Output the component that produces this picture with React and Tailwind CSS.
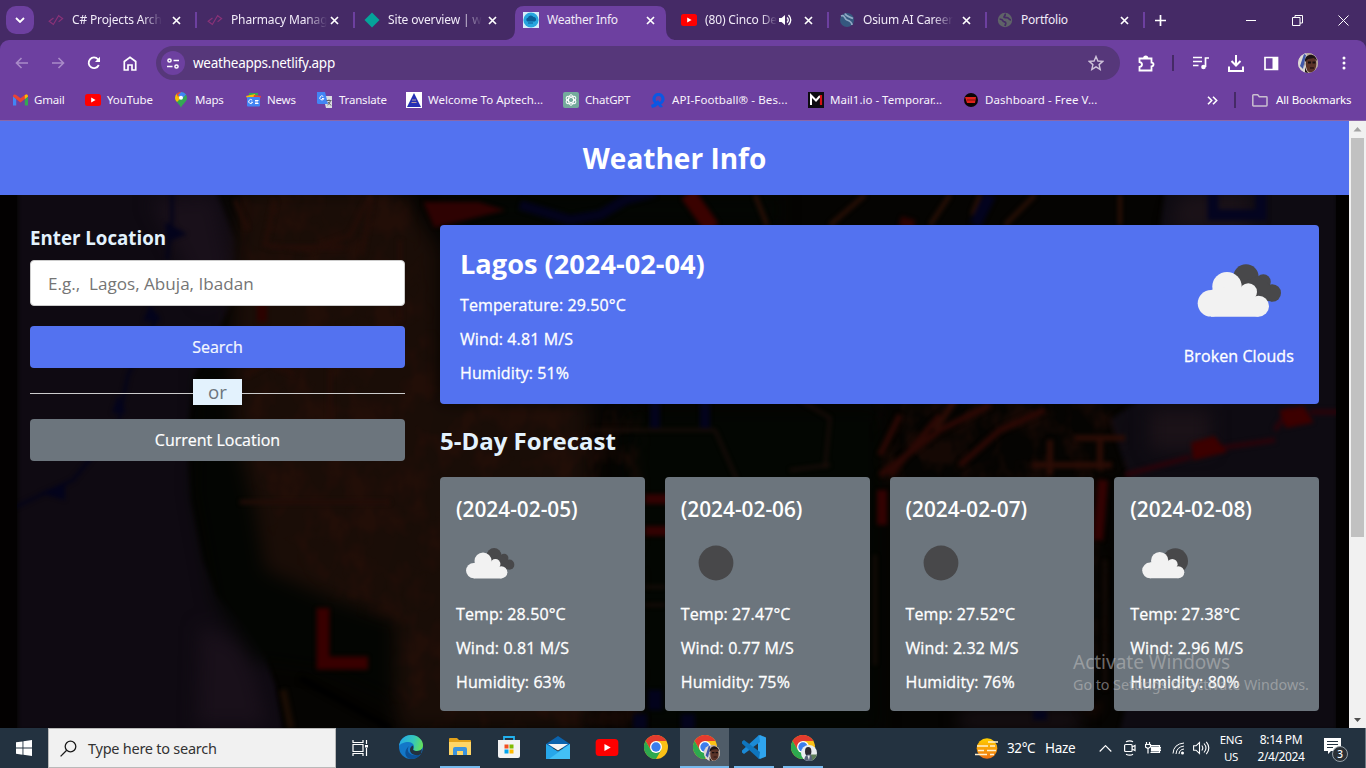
import React from 'react';

const UI = "font-['Noto_Sans','Open_Sans',sans-serif]";

function Cloud({ size, className = '' }) {
  return (
    <svg width={size} height={size} viewBox="0 0 100 100" className={className}>
      <g fill="#48484a">
        <circle cx="57" cy="42" r="12.700" /><circle cx="74.300" cy="46.700" r="7.500" /><circle cx="83.300" cy="58" r="8.700" />
        <path d="M56 46 69 41l13 10-2 15-14 2z" />
      </g>
      <g fill="#f2f2f2">
        <circle cx="22" cy="68.300" r="13.300" /><circle cx="38" cy="51.700" r="14.700" /><circle cx="59.300" cy="57" r="8.700" /><circle cx="69.500" cy="71.200" r="10.500" />
        <path d="M22 55 45 50l20 8 4.500 23.700H22z" />
      </g>
    </svg>
  );
}

function Moon() {
  return <svg width="70" height="70" viewBox="0 0 70 70"><circle cx="35" cy="35" r="17.4" fill="#48484a" /></svg>;
}

function Scattered() {
  return (
    <svg width="70" height="70" viewBox="0 0 70 70">
      <circle cx="45.300" cy="33" r="12.700" fill="#48484a" />
      <g fill="#f2f2f2">
        <circle cx="20" cy="42.400" r="7.800" /><circle cx="29.700" cy="32.700" r="8.700" /><circle cx="42.300" cy="36.200" r="5.300" /><circle cx="48.300" cy="44.200" r="6" />
        <path d="M20 34.600 34 32l10 3 4.300 15.200H20z" />
      </g>
    </svg>
  );
}

function YT({ w = 16, h = 12 }) {
  return (
    <svg width={w} height={h} viewBox="0 0 16 12" className="shrink-0">
      <rect width="16" height="12" rx="2.5" fill="#f00" /><path d="M6.2 3.6v4.8L10.6 6z" fill="#fff" />
    </svg>
  );
}

function CodeFav() {
  return (
    <svg width="16" height="16" viewBox="0 0 16 16" fill="none" stroke="#8a3278" strokeWidth="1.2">
      <path d="M5.5 6 1.2 9.3 4.8 12M10.2 3.5l4.4 3-4 3.4M11 3 5 13" />
    </svg>
  );
}

function Swirl({ a, b }) {
  return (
    <svg width="16" height="16" viewBox="0 0 16 16">
      <circle cx="8" cy="8" r="7" fill={a} />
      <path d="M2 4c4-2 3 3 6 4s5 2 5 5M6 1.5c1 3 4 3 8 5" stroke={b} strokeWidth="1.7" fill="none" />
    </svg>
  );
}

function Globe() {
  return (
    <svg width="16" height="16" viewBox="0 0 16 16">
      <circle cx="8" cy="8" r="7.2" fill="#5f6368" />
      <path d="M2.6 7c2 .2 3 .8 3.6 2.2.8 1 2.6.4 2.6 2 0 1-.6 1.6-.8 2.8M8 1.6c1 1.8-1 2.6-1 3.6 1.4 1.4 3-.6 4.4 1 1 1.2 1.400 1.800 2.600 1.600" stroke="#452a66" strokeWidth="1.7" fill="none" />
    </svg>
  );
}

function WeatherFav() {
  return (
    <svg width="16" height="16" viewBox="0 0 16 16">
      <rect width="16" height="16" fill="#d6eefa" /><circle cx="8" cy="8" r="7.6" fill="#27a5de" />
      <path d="M4.500 9.500a2 2 0 0 1 .4-3.800 3 3 0 0 1 5.600-.6 2.300 2.300 0 0 1 1.200 4.400z" fill="#0b5f99" />
      <path d="M5 11h5" stroke="#0b5f99" />
    </svg>
  );
}

function X() {
  return (
    <svg width="9" height="9" viewBox="0 0 9 9" className="shrink-0"><path d="M1 1l7 7M8 1 1 8" stroke="#fff" strokeWidth="1.7" /></svg>
  );
}

function Tab({ icon, label, sep = true, tight = 'tracking-[-0.15px]', extra, fade = true, pad = 'pl-[14px]' }) {
  return (
    <div className={`relative flex h-[34px] w-[158px] shrink-0 items-center ${pad}`}>
      <div className="flex w-4 shrink-0 justify-center">{icon}</div>
      <div className={`ml-2 shrink-0 whitespace-nowrap text-[12px] text-[#f1ebf8] ${tight} ${fade ? '[mask-image:linear-gradient(to_right,black_78%,transparent)]' : ''}`}>{label}</div>
      {extra}
      <div className="absolute right-[11px]"><X /></div>
      {sep && <div className="absolute -right-[5px] h-4 w-0.5 bg-[#6d40a0]" />}
    </div>
  );
}

function Book({ icon, label, w, tight = 'tracking-[-0.2px]' }) {
  return (
    <div className={`flex shrink-0 items-center gap-[6px] ${w}`}>
      <span className="flex w-4 shrink-0 justify-center">{icon}</span>
      <span className={`whitespace-nowrap text-[11.5px] text-[#f8f4fc] ${tight}`}>{label}</span>
    </div>
  );
}

function Avatar({ size, alt }) {
  return (
    <svg width={size} height={size} viewBox="0 0 20 20">
      <defs><clipPath id={`av${size}${alt ? 'b' : 'a'}`}><circle cx="10" cy="10" r="10" /></clipPath></defs>
      <g clipPath={`url(#av${size}${alt ? 'b' : 'a'})`}>
        <rect width="20" height="20" fill={alt ? '#e9edf0' : '#c9c4c4'} />
        {alt ? (
          <>
            <path d="M12 12h8v8h-9z" fill="#5d7d58" /><ellipse cx="9" cy="8" rx="4" ry="5.500" fill="#2c2a33" /><path d="M4 20c0-6 3-8 6-8s4 3 4 8z" fill="#56627a" /><path d="m8 13 2 6 1-6z" fill="#eee" />
          </>
        ) : (
          <>
            <path d="M0 0h8v20H0z" fill="#ddd8d4" /><path d="M2 13 6 1l2 1-3 14z" fill="#4058a8" />
            <path d="M9 0h11v20H9z" fill="#b9a89a" />
            <ellipse cx="13" cy="11" rx="5.300" ry="9" fill="#5a3328" /><path d="M7 9c-1-9 11-10 12-1l-3-3-6 1z" fill="#1d1214" /><path d="M10 9.500h3M14.500 9.500h3" stroke="#160d0e" strokeWidth="1.800" /><path d="M12 15h4" stroke="#2b1414" strokeWidth="1.500" />
            <path d="M7 8c-1 4 0 8 3 12H7z" fill="#1d1214" />
          </>
        )}
      </g>
    </svg>
  );
}

function Chrome() {
  return (
    <svg width="24" height="24" viewBox="0 0 24 24">
      <circle cx="12" cy="12" r="12" fill="#fbc116" />
      <path d="M1.600 6A12 12 0 0 1 22.400 6H12L6.800 15z" fill="#e33b2e" />
      <path d="M1.600 6 6.800 15l5.200 3 5.200-3L12 24A12 12 0 0 1 1.600 6z" fill="#2da94f" />
      <circle cx="12" cy="12" r="6" fill="#fff" /><circle cx="12" cy="12" r="4.700" fill="#3b7ded" />
    </svg>
  );
}

function Backdrop() {
  return (
    <svg className="absolute inset-0" width="1349" height="533" viewBox="0 195 1349 533">
      <defs>
        <filter id="soft" x="-5%" y="-5%" width="110%" height="110%" colorInterpolationFilters="sRGB"><feGaussianBlur stdDeviation="2.200" /></filter>
        <filter id="wide" x="-10%" y="-10%" width="120%" height="120%" colorInterpolationFilters="sRGB"><feGaussianBlur stdDeviation="9" /></filter>
        <filter id="grain" x="0" y="0" width="100%" height="100%" colorInterpolationFilters="sRGB">
          <feGaussianBlur in="SourceGraphic" stdDeviation="6" result="area" />
          <feTurbulence type="fractalNoise" baseFrequency="0.040 0.030" numOctaves="3" seed="8" />
          <feColorMatrix values="0 0 0 0 0.190  0 0 0 0 0.065  0 0 0 0 0.035  3 0 0 0 -1.250" />
          <feComposite in2="area" operator="in" />
        </filter>
      </defs>
      <rect y="195" width="1349" height="533" fill="#050402" />
      <g filter="url(#soft)">
        <path d="M18 190H215l20 50-3 60-20 45-17 30-8 60 4 65 12 60 14 35 40 40 18 50 8 45H18z" fill="#0f0a12" />
        <path d="M1165 190h172v540H1120l40-170-30-80-20-60 30-20z" fill="#0e0b12" />
      </g>
      <g filter="url(#wide)">
        <path d="M240 190H400l40 60v370l-100 20-80-70-25-110-5-90z" fill="#1a0d07" />
        <path d="M440 400h150v330H400l-20-130z" fill="#190d07" />
        <path d="M150 200 215 195l15 70-25 40zM200 625l40 20 15 30 12 50h-70z" fill="#19101a" />
        <path d="M200 370h28l2 60 10 20 15 60 10 60 70 30 60 20v80l-70-30-70-10-40-60-20-110z" fill="#030502" />
        <path d="M620 410h260v320H640zM450 195h330v30H450z" fill="#030602" />
        <path d="M1180 195h70v35h-80zM1150 410h60v40h-60zM960 712h120v16H960z" fill="#1b1218" />
      </g>
      <path d="M240 190h170v50l30 160 200 10v318H400V620l-60-20-75-90-20-120zM880 400h230l20 75h-30v240h-20V480H880z" filter="url(#grain)" opacity=".38" />
      <g filter="url(#soft)" fill="none" strokeWidth="7">
        <path d="M172 190v30l-5 40M158 315l-30 60-10 50-45 55-60 28" stroke="#03031a" strokeWidth="3" />
        <path d="M165 222l22 12-20 8zM150 305l11 16h-18zM118 395l8 18h-14zM40 493l25-10v17z" fill="#03031c" />
        <path d="M235 200l12 28M275 200l-10 45 45 5 40-15 20-40M372 195l-10 60M270 247h75M245 375l25-13 25 12M330 370v60M240 502h150M400 240v80" stroke="#240d07" strokeWidth="4" />
        <path d="M428 205h50l16 5-58 14z" stroke="#2e0202" strokeWidth="6" fill="#2e0202" />
        <path d="M323 608v55h45" stroke="#380000" strokeWidth="13" />
        <path d="M688 194l24 34" stroke="#3a0200" strokeWidth="16" />
        <path d="M262 300v22M900 221l14 4" stroke="#2c0200" strokeWidth="10" />
        <path d="M755 195l12 30M865 195l-35 30M950 195l-20 30M980 195l-8 20M1035 195l-30 30M1120 195v30" stroke="#2b1006" strokeWidth="4" />
        <path d="M520 205l50 15 30-5 25-15 30-8M655 400v28M705 400v28" stroke="#03031c" strokeWidth="10" />
        <path d="M990 195l-15 30" stroke="#03031e" strokeWidth="12" />
        <path d="M1213 190v25h48v-25" stroke="#040420" strokeWidth="11" />
        <path d="M880 475l60-45 50-25M900 415l-20 40M960 465l40-35 45-20M940 415l-50 60" stroke="#2b0804" strokeWidth="6" />
        <path d="M1050 440v35M1075 438h50M1032 465h80M1100 440v30M955 400l-20 30" stroke="#2b0c05" strokeWidth="6" />
        <path d="M1125 475l65-18M1220 448l55-8M1275 430l15-22M1310 412h38" stroke="#2a030a" strokeWidth="5" />
        <path d="M1195 445l18-5 8 10-25 6zM1284 413l18-3 6 10-20 4z" fill="#3c0000" stroke="#3c0000" />
        <path d="M645 499h24M645 531h24M882 490v35M1103 480l-5 60" stroke="#330202" strokeWidth="10" />
        <path d="M655 690v20M640 714v15M688 714v15M1040 710v10" stroke="#03031c" strokeWidth="14" />
        <path d="M715 430l22 50M800 400l30 18-5 50M590 430h125M790 470l40-5M645 587h20M645 605h20M875 555v110M1105 560v130" stroke="#1e0e0a" strokeWidth="2.500" />
        <path d="M283 690l8 38" stroke="#1b0d04" strokeWidth="7" />
        <path d="M300 678l90 50" stroke="#000" strokeWidth="7" />
      </g>
      <rect y="195" width="17" height="533" fill="#030101" /><rect x="1336" y="195" width="13" height="533" fill="#020101" />
    </svg>
  );
}

const days = [
  ['(2024-02-05)', '28.50', '0.81', '63', <Cloud size={58} className="ml-[5px] mt-[3px]" />],
  ['(2024-02-06)', '27.47', '0.77', '75', <Moon />],
  ['(2024-02-07)', '27.52', '2.32', '76', <Moon />],
  ['(2024-02-08)', '27.38', '2.96', '80', <Scattered />],
];

function Browser() {
  return (
    <div className={`h-[121px] shrink-0 bg-[#452a66] ${UI}`}>
      <div className="flex h-10 items-start pl-[6px] pt-[3px]">
        <div className="mt-[3px] flex h-7 w-7 items-center justify-center rounded-[10px] bg-[#6d40a0]">
          <svg width="10" height="6" viewBox="0 0 10 6"><path d="m1 1 4 4 4-4" fill="none" stroke="#fff" strokeWidth="1.800" /></svg>
        </div>
        <Tab icon={<CodeFav />} label="C# Projects Arch" />
        <Tab icon={<CodeFav />} label="Pharmacy Manag" pad="pl-[15px]" />
        <Tab icon={<svg width="16" height="16" viewBox="0 0 16 16"><path d="m8 .5 7.500 7.500L8 15.500.5 8z" fill="#05a39a" /></svg>} label="Site overview | w" sep={false} />
        <div className="relative -mx-[5px] mt-[3px] flex h-[34px] w-[168px] shrink-0 items-start justify-center">
          <svg className="absolute left-[3px] top-0" width="168" height="34" viewBox="0 0 168 34"><path d="M-2 34Q9 34 9 23V9Q9 0 18 0H151Q160 0 160 9V23Q160 34 171 34z" fill="#6d40a0" /></svg>
          <div className="relative -mt-[3px] ml-0"><Tab fade={false} sep={false} icon={<WeatherFav />} label="Weather Info" tight="tracking-[-0.25px]" pad="pl-[15px]" /></div>
        </div>
        <Tab icon={<YT />} label="(80) Cinco De" tight="tracking-[-0.15px]" pad="pl-[15px]" extra={
          <svg width="14" height="12" viewBox="0 0 14 12" className="absolute left-[112px]"><path d="M1 4h2.500L7 1v10L3.500 8H1z" fill="#fff" /><path d="M9 3.500q2.500 2.500 0 5M10.500 1q4.500 5 0 10" fill="none" stroke="#fff" strokeWidth="1.300" /></svg>} />
        <Tab icon={<Swirl a="#35587f" b="#90a8c4" />} label="Osium AI Career" pad="pl-[15px]" />
        <Tab icon={<Globe />} label="Portfolio" tight="tracking-[-0.2px]" fade={false} pad="pl-[15px]" />
        <svg width="11" height="11" viewBox="0 0 11 11" className="ml-[15px] mt-[12px]"><path d="M5.500 0v11M0 5.500h11" stroke="#fff" strokeWidth="1.700" /></svg>
        <svg width="10" height="10" viewBox="0 0 10 10" className="ml-auto mt-[12px]"><path d="M0 5.500h10" stroke="#fff" /></svg>
        <svg width="11" height="11" viewBox="0 0 11 11" className="ml-9 mt-[12px]" fill="none" stroke="#fff"><path d="M.5 2.500h7.500v8H.5zM3 2.500V.5h7.500V8H8" /></svg>
        <svg width="11" height="11" viewBox="0 0 11 11" className="ml-[35px] mr-[17px] mt-[12px]"><path d="m.5.5 10 10M10.500.5l-10 10" stroke="#fff" /></svg>
      </div>
      <div className="flex h-[81px] flex-col rounded-t-[9px] border-b border-[#8b66a8] bg-[#6d40a0]">
        <div className="flex h-[46px] shrink-0 items-center">
          <svg width="14" height="12" viewBox="0 0 14 12" className="ml-[15px]" fill="none" stroke="#a98bc8" strokeWidth="1.600"><path d="M13 6H1.500M6.500 1l-5 5 5 5" /></svg>
          <svg width="14" height="12" viewBox="0 0 14 12" className="ml-[22px]" fill="none" stroke="#a98bc8" strokeWidth="1.600"><path d="M1 6h11.500M7.500 1l5 5-5 5" /></svg>
          <svg width="14" height="14" viewBox="0 0 14 14" className="ml-[22px]"><path d="M11.800 9A5.300 5.300 0 1 1 11 3.300L12.500 5" fill="none" stroke="#fff" strokeWidth="1.800" /><path d="M13 .8V6H8z" fill="#fff" /></svg>
          <svg width="14" height="15" viewBox="0 0 14 15" className="ml-[22px]" fill="none" stroke="#fff" strokeWidth="1.700"><path d="M1.300 14V5.500L7 1.300l5.700 4.200V14H9V9H5v5z" /></svg>
          <div className="ml-[19px] flex h-[34px] w-[964px] items-center rounded-full bg-[#56377a] pl-[5px] pr-[16px]">
            <div className="flex h-6 w-6 items-center justify-center rounded-full bg-[#6d40a0]">
              <svg width="12" height="11" viewBox="0 0 12 11" fill="none" stroke="#fff" strokeWidth="1.500"><circle cx="2.500" cy="2.500" r="1.600" /><path d="M6.500 2.500H12M0 8.500h5.500" /><circle cx="9.500" cy="8.500" r="1.600" /></svg>
            </div>
            <span className="ml-2 text-[13.500px] tracking-[-0.250px] text-white">weatheapps.netlify.app</span>
            <svg width="16" height="16" viewBox="0 0 16 16" className="ml-auto" fill="none" stroke="#cfc3da" strokeWidth="1.400"><path d="m8 1.500 1.900 4.500 4.900.4-3.700 3.200 1.100 4.800L8 11.800l-4.200 2.600 1.100-4.800L1.200 6.400 6.100 6z" /></svg>
          </div>
          <svg width="17" height="17" viewBox="0 0 17 17" className="ml-[18px]" fill="none" stroke="#fff" strokeWidth="1.800"><path d="M1.500 3.500h12v4.200q2 .2 2 1.800t-2 1.800v4.200h-12v-3.500q2.500-.5 2.500-2.500T1.500 7z" /><path d="M6 3.200q0-1.700 1.700-1.700t1.700 1.700" fill="#fff" /></svg>
          <div className="ml-[17px] h-4 w-0.5 bg-[#452a66]" />
          <svg width="16" height="14" viewBox="0 0 16 14" className="ml-[19px]" fill="none" stroke="#fff" strokeWidth="1.700"><path d="M0 1.500h9M0 5.500h9M0 9.500h5.500" /><path d="M12.500 11V2H16" /><circle cx="10.500" cy="11" r="2.300" fill="#fff" stroke="none" /></svg>
          <svg width="16" height="17" viewBox="0 0 16 17" className="ml-[19px]" fill="none" stroke="#fff" strokeWidth="2"><path d="M8 0v10M3.500 6 8 10.500 12.500 6M1 11.500V16h14v-4.500" /></svg>
          <svg width="15" height="15" viewBox="0 0 15 15" className="ml-5"><path d="M1 1.500h12.500v12H1z" fill="none" stroke="#fff" strokeWidth="1.700" /><path d="M8.500 1H14v13H8.500z" fill="#fff" /></svg>
          <div className="ml-[19px]"><Avatar size={20} /></div>
          <svg width="4" height="14" viewBox="0 0 4 14" className="ml-6" fill="#fff"><circle cx="2" cy="2" r="1.500" /><circle cx="2" cy="7" r="1.500" /><circle cx="2" cy="12" r="1.500" /></svg>
        </div>
        <div className="flex h-[28px] items-center pl-3">
          <Book w="w-[73px]" label="Gmail" icon={<svg width="15" height="12" viewBox="0 0 15 12"><path d="M0 2v9.500h3.200V5z" fill="#4285f4" /><path d="M11.800 5v6.500H15V2z" fill="#34a853" /><path d="M0 2.500C0 0 2 0 3.200 1L7.500 4.300 11.800 1C13 0 15 0 15 2.500L7.500 8.500z" fill="#ea4335" /><path d="M11.800 1C13 0 15 0 15 2.500L11.800 5z" fill="#fbbc04" /></svg>} />
          <Book w="w-[88px]" label="YouTube" tight="tracking-[-0.1px]" icon={<YT />} />
          <Book w="w-[72px]" label="Maps" icon={<svg width="12" height="16" viewBox="0 0 12 16"><path d="M0 6a6 6 0 0 1 12 0c0 4-5 6-6 10C5 12 0 10 0 6z" fill="#34a853" /><path d="M0 6a6 6 0 0 1 2-4.500L6 6 2 10Q0 8 0 6z" fill="#fbbc04" /><path d="M1.500 2A6 6 0 0 1 7 0L3 5z" fill="#ea4335" /><path d="M6 0a6 6 0 0 1 5 2.500L7 7 3 3z" fill="#4285f4" /><circle cx="6" cy="5.800" r="2" fill="#fff" /></svg>} />
          <Book w="w-[72px]" label="News" icon={<svg width="15" height="14" viewBox="0 0 15 14"><path d="M3 0h9v4H3z" fill="#34a853" /><path d="m0 3 9-2 1 4H1z" fill="#fbbc04" /><path d="m8 2 7 1-1 3H7z" fill="#ea4335" /><rect x="1" y="4" width="13" height="9.500" rx="1" fill="#4285f4" /><path d="M6.200 7.200a2 2 0 1 0 .4 2H5M9 7.500h3.500M9 9h3M9 10.500h3.500" stroke="#fff" fill="none" /></svg>} />
          <Book w="w-[89px]" label="Translate" icon={<svg width="16" height="16" viewBox="0 0 16 16"><path d="M6 4h9v12H9z" fill="#dadce0" /><path d="M0 0h8l3 12H1.500Q0 12 0 10.500z" fill="#4285f4" /><path d="M6.300 4.500a2 2 0 1 0 .5 2H5" stroke="#fff" fill="none" /><path d="M9.500 8.500h5M12 7.500v1M13.500 8.500q-.5 3-3 4.500M11 10l3 3.500" stroke="#5f6368" fill="none" /></svg>} />
          <Book w="w-[157px]" label="Welcome To Aptech..." tight="tracking-[0px]" icon={<svg width="16" height="16" viewBox="0 0 16 16"><rect width="16" height="16" fill="#fff" /><path d="M8 1l7 14H1z" fill="#2430b4" /><path d="M6 8h4M5.500 10.500h5" stroke="#b59aa0" /></svg>} />
          <Book w="w-[87px]" label="ChatGPT" icon={<svg width="16" height="16" viewBox="0 0 16 16"><rect width="16" height="16" rx="2" fill="#74aa9c" /><g fill="none" stroke="#fff"><ellipse cx="8" cy="8" rx="2.500" ry="5.300" /><ellipse cx="8" cy="8" rx="2.500" ry="5.300" transform="rotate(60 8 8)" /><ellipse cx="8" cy="8" rx="2.500" ry="5.300" transform="rotate(120 8 8)" /></g></svg>} />
          <Book w="w-[158px]" label="API-Football® - Bes..." tight="tracking-[0.1px]" icon={<svg width="14" height="15" viewBox="0 0 14 15"><circle cx="7.500" cy="6" r="4.500" fill="none" stroke="#0b57e3" strokeWidth="3.200" /><path d="M0 12q5-2 7-5l5 7-3 .5L7 12q-3 3-6 3z" fill="#0b57e3" /></svg>} />
          <Book w="w-[155px]" label="Mail1.io - Temporar..." tight="tracking-[0px]" icon={<svg width="16" height="16" viewBox="0 0 16 16"><rect width="16" height="16" fill="#0d0c11" /><path d="M3 13V3.500l5 5 4-4.500" stroke="#fff" strokeWidth="2" fill="none" /><path d="M13 3v10" stroke="#d51115" strokeWidth="2.200" /></svg>} />
          <Book w="w-[150px]" label="Dashboard - Free V..." tight="tracking-[0.05px]" icon={<svg width="14" height="14" viewBox="0 0 14 14"><circle cx="7" cy="7" r="7" fill="#0b0505" /><path d="M1 4h11l-1 6H3z" fill="#e0221c" /><path d="M3 7h8" stroke="#7d0f0f" /></svg>} />
          <svg width="11" height="9" viewBox="0 0 11 9" className="ml-[94px]" fill="none" stroke="#fff" strokeWidth="1.600"><path d="m1 .8 3.700 3.700L1 8.200M6 .8l3.700 3.700L6 8.200" /></svg>
          <div className="ml-[16px] h-4 w-0.5 bg-[#452a66]" />
          <svg width="16" height="13" viewBox="0 0 16 13" className="ml-4" fill="none" stroke="#c9bfcf" strokeWidth="1.500"><path d="M.8 1.500Q.8.800 1.500.800h4.200l1.600 2h7q.7 0 .7.700v7.800q0 .7-.7.700H1.500q-.7 0-.7-.7z" /></svg>
          <span className="ml-2 whitespace-nowrap text-[11.500px] tracking-[-0.150px] text-white">All Bookmarks</span>
        </div>
      </div>
    </div>
  );
}

const MEDIUM = 'text-[16px] font-medium leading-6 tracking-[0.1px] [-webkit-text-stroke:0.3px_white]';

function WeatherPage() {
  return (
    <div className="relative flex h-[607px] shrink-0 font-['Open_Sans',sans-serif]">
      <div className="flex h-full w-[1349px] flex-col overflow-hidden">
        <h1 className="flex h-[74px] shrink-0 items-center justify-center bg-[#5372f0] text-[28px] font-bold text-white">Weather Info</h1>
        <div className="relative flex flex-1 gap-[35px] px-[30px] pt-[30px]">
          <Backdrop />
          <div className="relative w-[375px] shrink-0">
            <h3 className="h-[35px] text-[18.720px] font-bold leading-[26px] text-[#e3f2fd]">Enter Location</h3>
            <div className="flex h-[46px] items-center whitespace-pre rounded border border-[#ccc] bg-white px-[17px] pt-[2px] text-[17.100px] text-[#757575]">E.g.,  Lagos, Abuja, Ibadan</div>
            <button className="mt-5 block h-[42px] w-full rounded bg-[#5372f0] text-[16px] text-[#f1f6ff] [-webkit-text-stroke:0.2px_white]">Search</button>
            <div className="flex h-[51px] items-center">
              <div className="h-px flex-1 bg-[#ccc]" />
              <div className="mb-[3px] flex h-[26px] w-[49px] items-center justify-center bg-[#e3f2fd] pt-px text-[18.700px] text-[#6c757d]">or</div>
              <div className="h-px flex-1 bg-[#ccc]" />
            </div>
            <button className="block h-[42px] w-full rounded bg-[#6c757d] text-[16px] text-white [-webkit-text-stroke:0.2px_white]">Current Location</button>
          </div>
          <div className="relative w-[879px] shrink-0">
            <div className="flex h-[179px] justify-between rounded bg-[#5372f0] px-5 text-white">
              <div className="pt-[19px]">
                <h2 className="text-[27.200px] font-bold leading-[40px]">Lagos (2024-02-04)</h2>
                <div className={`mt-[9px] flex flex-col gap-[10px] ${MEDIUM}`}>
                  <p>Temperature: 29.50°C</p><p>Wind: 4.81 M/S</p><p>Humidity: 51%</p>
                </div>
              </div>
              <div className="mr-[5px] flex flex-col items-center pt-[10px]">
                <Cloud size={100} />
                <p className={`mt-[9px] ${MEDIUM}`}>Broken Clouds</p>
              </div>
            </div>
            <h2 className="mt-[19px] text-[24px] font-bold leading-9 text-[#e3f2fd]">5-Day Forecast</h2>
            <div className="mt-[18px] grid grid-cols-4 gap-5">
              {days.map(([d, t, w, h, icon]) => (
                <div key={d} className="flex h-[234px] flex-col items-start rounded bg-[#6c757d] px-4 pt-[16px] text-white">
                  <h3 className="text-[20.800px] font-semibold leading-[32px]">{d}</h3>
                  <div className="mt-[3px] h-[70px]">{icon}</div>
                  <div className={`mt-[4px] flex flex-col gap-[10px] ${MEDIUM}`}>
                    <p>Temp: {t}°C</p><p>Wind: {w} M/S</p><p>Humidity: {h}%</p>
                  </div>
                </div>
              ))}
            </div>
          </div>
        </div>
      </div>
      <div className="flex h-full w-[17px] flex-col items-center justify-between bg-[#f1f1f1]">
        <svg width="17" height="17" viewBox="0 0 17 17"><path d="m4.500 10.500 4-4.500 4 4.500z" fill="#a3a3a3" /></svg>
        <div className="mb-auto h-[399px] w-[13px] bg-[#c1c1c1]" />
        <svg width="17" height="17" viewBox="0 0 17 17"><path d="m5 7 3.500 4L12 7z" fill="#505050" /></svg>
      </div>
      <div className={`absolute left-[1073px] top-[528px] whitespace-nowrap text-[#c0c0c0]/55 ${UI}`}>
        <p className="text-[19px] leading-[26px]">Activate Windows</p>
        <p className="text-[14.300px] leading-[20px] tracking-[-0.030px]">Go to Settings to activate Windows.</p>
      </div>
    </div>
  );
}

function Pinned({ children, open, active }) {
  return (
    <div className={`flex h-10 w-[49px] shrink-0 justify-center ${active ? 'bg-[#4f5c68]' : ''}`}>
      <div className={`flex h-10 items-center justify-center border-b-2 ${active ? 'w-full' : 'w-[40px]'} ${open ? 'border-[#76b9ed]' : 'border-transparent'}`}>{children}</div>
    </div>
  );
}

function Taskbar() {
  return (
    <div className={`flex h-10 shrink-0 items-center bg-[#233240] text-white ${UI}`}>
      <svg width="16" height="16" viewBox="0 0 16 16" className="ml-4" fill="#fff"><path d="M0 2.300 6.500 1.400v6.200H0zM7.400 1.300 16 0v7.600H7.400zM0 8.400h6.500v6.300L0 13.800zM7.400 8.400H16V16l-8.600-1.200z" /></svg>
      <div className="ml-4 flex h-10 w-[288px] items-center border border-[#b9b9b9] bg-[#f1f1f1] pl-[11px]">
        <svg width="17" height="17" viewBox="0 0 17 17" fill="none" stroke="#1b1b1b" strokeWidth="1.300"><circle cx="10.500" cy="6.500" r="5.300" /><path d="M6.700 10.300.6 16.400" /></svg>
        <span className="ml-[11px] pt-px text-[14.500px] tracking-[-0.250px] text-[#333]">Type here to search</span>
      </div>
      <svg width="17" height="16" viewBox="0 0 17 16" className="ml-[16px] mr-[17px]" fill="none" stroke="#fff" strokeWidth="1.200"><path d="M1 0v2.500h10V0M1 4.500h10v7H1zM1 16v-2.500h10V16M14.500 0v4M14.500 8v8" /><rect x="13" y="5" width="3" height="2.500" fill="#fff" stroke="none" /></svg>
      <Pinned><svg width="24" height="24" viewBox="0 0 24 24"><defs><linearGradient id="edg" x1="0" y1="0.300" x2="1" y2="0.500"><stop offset="0" stopColor="#24a8e8" /><stop offset=".6" stopColor="#36c8b8" /><stop offset="1" stopColor="#65e05a" /></linearGradient></defs><circle cx="12" cy="12" r="12" fill="#1377c8" /><path d="M0 11C1 4 6 0 12 0c7 0 12 5 12 10 0 4-3 6-6 6-3.500 0-4.500-1.300-3.500-2.700C16 11 14 7 9.500 7 5 7 1 9 0 11z" fill="url(#edg)" /><path d="M10 11c-4 6 3 12 12 8-2 3-6 5-10 5C6 23.500 4 16 10 11z" fill="#0c5096" /><path d="M14.500 13.300c-1 1.400 0 2.700 3.500 2.700 2 0 4-.7 5-2l-1 5c-5 3-11 0-11-4 0-2 1-4 3-4.500z" fill="#233240" /></svg></Pinned>
      <Pinned open><svg width="22" height="20" viewBox="0 0 22 20"><path d="M0 2q0-1 1-1h7l2 2h11q1 0 1 1v3H0z" fill="#e3a21a" /><path d="M0 5h22v13H0z" fill="#ffd667" /><path d="M4 18v-6q0-2 2-2h10q2 0 2 2v6h-4v-4H8v4z" fill="#3c93dd" /></svg></Pinned>
      <Pinned><svg width="24" height="24" viewBox="0 0 24 24"><path d="M7 6V2h10v4" fill="none" stroke="#22b2ef" strokeWidth="1.800" /><path d="M1 5h22v16q0 2-2 2H3q-2 0-2-2z" fill="#f3f3f3" /><path d="M7.500 9.500h4v4h-4z" fill="#f25022" /><path d="M12.500 9.500h4v4h-4z" fill="#7fba00" /><path d="M7.500 14.500h4v4h-4z" fill="#00a4ef" /><path d="M12.500 14.500h4v4h-4z" fill="#ffb900" /></svg></Pinned>
      <Pinned><svg width="24" height="23" viewBox="0 0 24 23"><path d="M0 8 12 0l12 8v4H0z" fill="#0b63ad" /><path d="M0 8l12 7.500L24 8v15H0z" fill="#27a7ea" /><path d="M24 8v15H3z" fill="#43c0f5" /><path d="M2 8h20L12 14.500z" fill="#f4f4f4" /></svg></Pinned>
      <Pinned><YT w={24} h={17} /></Pinned>
      <Pinned><Chrome /></Pinned>
      <Pinned open active><div className="relative"><Chrome /><div className="absolute left-[11px] top-[10px]"><Avatar size={16} /></div></div></Pinned>
      <Pinned open><svg width="24" height="24" viewBox="0 0 24 24"><path d="M18 0l6 2.500v19L18 24l-2-1V1z" fill="#2fa4ee" /><path d="M17 0 0 15.500v2l2 1.500L18 7z" fill="#1b8ad6" /><path d="M17 24 0 8.500v-2L2 5l16 12z" fill="#0f75bd" /></svg></Pinned>
      <Pinned open><div className="relative"><Chrome /><div className="absolute left-[10px] top-[10px]"><Avatar size={16} alt /></div></div></Pinned>
      <svg width="24" height="21" viewBox="0 0 24 21" className="ml-auto"><defs><linearGradient id="sun" x1="0" y1="0" x2="0" y2="1"><stop offset="0" stopColor="#ffd000" /><stop offset="1" stopColor="#f07012" /></linearGradient></defs><circle cx="12" cy="10.500" r="10.300" fill="url(#sun)" /><path d="M13 4h10M2 8h11M15 8h5M3 12.500h6M12 12.500h9M0 16.500h12M15 16.500h4" stroke="#fff0cf" strokeWidth="1.700" /></svg>
      <span className="ml-[8px] w-[38px] whitespace-nowrap text-[13.500px] tracking-[-0.400px]">32°C</span>
      <span className="w-[54px] text-[13.500px] tracking-[-0.300px]">Haze</span>
      <svg width="13" height="7" viewBox="0 0 13 7" fill="none" stroke="#fff" strokeWidth="1.200"><path d="m.7 6.500 5.800-5.800 5.800 5.800" /></svg>
      <svg width="12" height="16" viewBox="0 0 12 16" className="ml-[12px]" fill="none" stroke="#fff" strokeWidth="1.200"><rect x=".6" y="4.500" width="7.500" height="7" rx="1" /><path d="m8 7 3-1.500v5L8 9M2 1.800q4-2 7 0M2 14.200q4 2 7 0" /></svg>
      <svg width="16" height="12" viewBox="0 0 16 12" className="ml-[9px]" fill="none" stroke="#fff" strokeWidth="1.200"><path d="M5.500 3.500h9v7h-9" /><path d="M6.500 5h7v4h-7z" fill="#fff" /><path d="M14.500 5.500H16v3h-1.500M1.500 0v2M4.500 0v2M.5 2.500h5V5L3 6.500.5 5zM3 6v5.500" /></svg>
      <svg width="13" height="13" viewBox="0 0 13 13" className="ml-[11px]" fill="none" stroke="#fff"><path d="M1 11.500Q1.500 2 12 1M4 12q.5-7 8-8M7 12q.3-4.500 5-5" /><circle cx="10.500" cy="11" r="1.500" fill="#fff" stroke="none" /></svg>
      <svg width="17" height="14" viewBox="0 0 17 14" className="ml-[8px]" fill="none" stroke="#fff" strokeWidth="1.100"><path d="M.6 4.800H3L6.500 1.500v11L3 9.200H.6zM8.800 4.500q2 2.500 0 5M11 2.500q4 4.500 0 9M13.300.8q5 6.200 0 12.400" /></svg>
      <div className="ml-[8px] w-[26px] text-center text-[11.500px] leading-[17px] tracking-[-0.400px]">ENG<br />US</div>
      <div className="ml-[10px] w-[54px] whitespace-nowrap text-center text-[12px] leading-[17px] tracking-[-0.400px]">8:14 PM<br />2/4/2024</div>
      <div className="relative ml-[16px] mr-[16px] h-[26px] w-[25px] pt-[3px]">
        <svg width="17" height="17" viewBox="0 0 17 17"><path d="M0 0h17v13H7l-3 3v-3H0z" fill="#fff" /><path d="M3 3.500h11M3 6.500h11M3 9.500h6" stroke="#233240" /></svg>
        <span className="absolute left-[8px] top-[11px] flex h-4 w-4 items-center justify-center rounded-full border border-[#96a0a8] bg-[#2a3036] text-[10px] font-medium">3</span>
      </div>
      <div className="h-10 w-px bg-[#6d7984]" />
    </div>
  );
}

export default function App() {
  return (
    <div className="flex h-[768px] w-[1366px] flex-col overflow-hidden bg-black">
      <Browser />
      <WeatherPage />
      <Taskbar />
    </div>
  );
}
